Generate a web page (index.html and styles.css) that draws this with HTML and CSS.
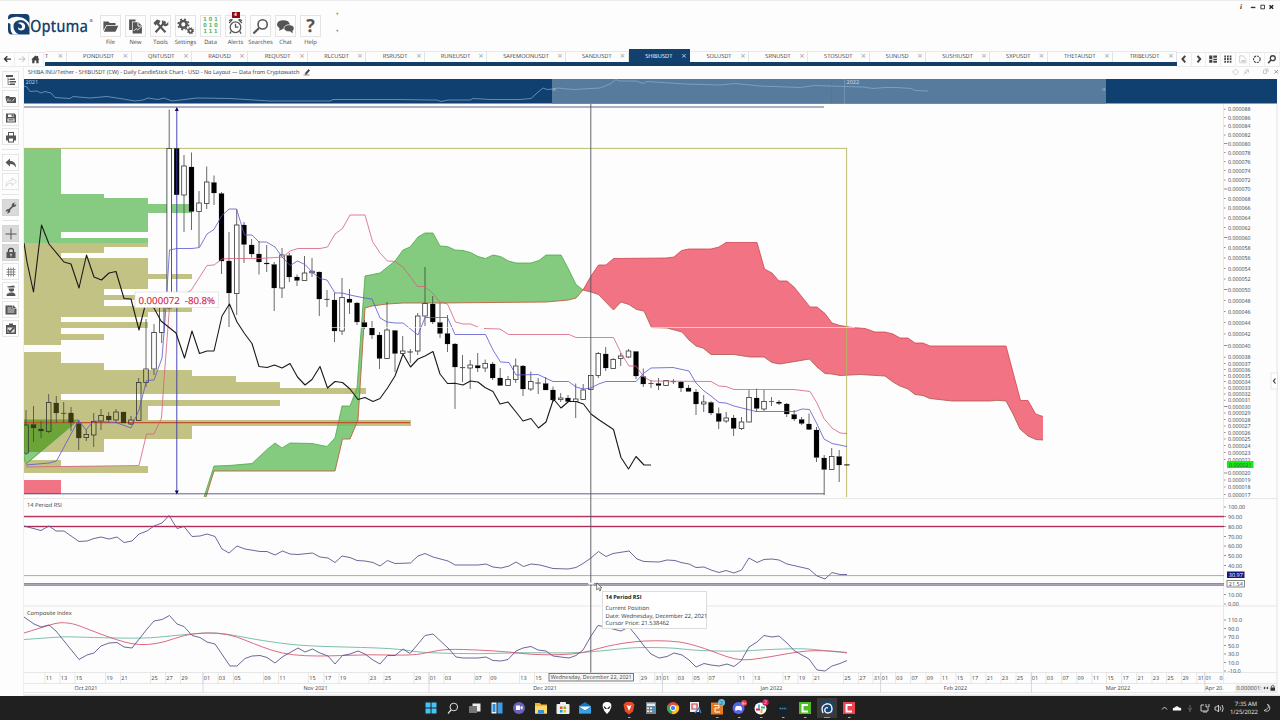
FILE: index.html
```html
<!DOCTYPE html>
<html lang="en">
<head>
<meta charset="utf-8">
<title>Optuma - SHIBUSDT</title>
<link rel="stylesheet" href="styles.css">
</head>
<body>
<svg class="defs" width="0" height="0">
  <symbol id="i-folder" viewBox="0 0 24 24"><path d="M2 5h7l2 2h8v3H6l-4 8z"/><path d="M6.5 11H23l-4 8.500H2.600z"/></symbol>
  <symbol id="i-new" viewBox="0 0 24 24"><path d="M3 2h9v3H7v12H3z"/><path d="M8 6h8l5 5v11H8z"/><path d="M15.500 6v5.500H21M10 18l3-3 2 2 4-4" fill="none" stroke="#fff" stroke-width="1.300"/></symbol>
  <symbol id="i-tools" viewBox="0 0 24 24"><path d="M5 5l14 15M19 5L5 20" fill="none" stroke="#555" stroke-width="3"/><path d="M2 7l5-5 5 2-2 4-3 0-2 3zM16 3l1 4 4 1 2-3v5l-4 2-5-3 0-5z"/></symbol>
  <symbol id="i-gears" viewBox="0 0 24 24"><circle cx="9" cy="9" r="4.700" fill="none" stroke="#555" stroke-width="3.600"/><circle cx="9" cy="9" r="7.500" fill="none" stroke="#555" stroke-width="2" stroke-dasharray="2.900 3"/><circle cx="19" cy="18" r="2.600" fill="none" stroke="#555" stroke-width="2.400"/><circle cx="19" cy="18" r="4.300" fill="none" stroke="#555" stroke-width="1.500" stroke-dasharray="1.700 1.700"/></symbol>
  <symbol id="i-alarm" viewBox="0 0 24 24"><g fill="none" stroke="#555" stroke-width="1.800"><circle cx="12" cy="13" r="7.500"/><path d="M12 8v5h4M3 7l4-4M21 7l-4-4M6 19l-2 3M18 19l2 3M3 4q3-3 5-1M21 4q-3-3-5-1"/></g></symbol>
  <symbol id="i-search" viewBox="0 0 24 24"><circle cx="15" cy="9" r="6.500" fill="none" stroke="#555" stroke-width="2.200"/><path d="M10 14l-8 8" stroke="#555" stroke-width="3"/></symbol>
  <symbol id="i-chat" viewBox="0 0 24 24"><ellipse cx="9" cy="9" rx="9" ry="6"/><path d="M4 12l-1 6 6-3z"/><ellipse cx="17" cy="14.500" rx="7.200" ry="5" stroke="#fff"/><path d="M18 18l4 4v-6z"/></symbol>
  <symbol id="i-tree" viewBox="0 0 24 24"><path d="M2 2h14v4H2zM10 9h10v3H10zM10 14h12v3H10zM10 19h10v3H10z"/><path d="M6 5v16h4M6 11h4M6 16h4" fill="none" stroke="#666" stroke-width="1.500"/></symbol>
  <symbol id="i-open" viewBox="0 0 24 24"><path d="M2 6h6l2 2h10l2 2v10H4L1 10z"/><path d="M6 17V11M10 17v-4M14 17l5-6" stroke="#fff" stroke-width="1.500"/></symbol>
  <symbol id="i-save" viewBox="0 0 24 24"><path fill-rule="evenodd" d="M2 3h17l3 3v15H2zM6 5v5h11V5zM5 13v6h14v-6z"/><path d="M13 5h3v4h-3zM7 14h10v1.500H7zM7 17h10v1H7z"/></symbol>
  <symbol id="i-print" viewBox="0 0 24 24"><path fill-rule="evenodd" d="M6 2h12v7h4v10h-4v4H6v-4H2V9h4zM8 4v5h8V4zM8 15v6h8v-6z"/></symbol>
  <symbol id="i-undo" viewBox="0 0 24 24"><path d="M10 3v5c8 0 12 5 12 13-3-5-6-7-12-7v5L1 11z"/></symbol>
  <symbol id="i-redo" viewBox="0 0 24 24"><path fill="none" stroke="#ccc" stroke-width="1.500" d="M14 4v5C6 9 2 13 2 21c3-5 6-7 12-7v5l9-8z"/></symbol>
  <symbol id="i-wrench" viewBox="0 0 24 24"><path d="M6 18L18 6" stroke="#555" stroke-width="3.500"/><path d="M1 20l2-5 5-1 3 4-3 4-5 1 3-3-1-2zM23 4l-2 5-5 1-3-4 3-4 5-1-3 3 1 2z"/></symbol>
  <symbol id="i-plus" viewBox="0 0 24 24"><path d="M12 1v22M1 12h22" stroke="#555" stroke-width="2"/></symbol>
  <symbol id="i-lock" viewBox="0 0 24 24"><path d="M7 11V7q0-4 5-4t5 4v4" fill="none" stroke="#444" stroke-width="2.600"/><path fill-rule="evenodd" d="M3 10h18v12H3zM12 13a2 2 0 0 0-1 3.500V19h2v-2.500A2 2 0 0 0 12 13z"/></symbol>
  <symbol id="i-hash" viewBox="0 0 24 24"><path d="M7 3v18M12 3v18M17 3v18M3 7h18M3 12h18M3 17h18" stroke="#888" stroke-width="2"/></symbol>
  <symbol id="i-head" viewBox="0 0 24 24"><path d="M4 3l14-2 2 4H6zM7 7h11v4q-5 5-10 0zM3 22q0-8 9-7 9-1 9 7z"/><path d="M2 16h8" stroke="#fff"/></symbol>
  <symbol id="i-note" viewBox="0 0 24 24"><path d="M1 3h14v6h8v12H1z"/><path d="M16 2l6 6h-6z"/><path d="M5 8h8M5 12h14M5 16h14" stroke="#fff" stroke-width="1.600"/></symbol>
  <symbol id="i-clip" viewBox="0 0 24 24"><path d="M2 4h20v18H2zM8 1h8v4H8z"/><path d="M5 9h14v10H5z" fill="#ddd"/><path d="M6 14l4 4 8-9" fill="none" stroke="#444" stroke-width="3"/></symbol>
</svg>
<div class="app">
  <header class="header">
    <div class="logo">
      <svg class="logo-mark" viewBox="0 0 22 22"><path fill="#14406f" d="M4 0h14q3.500 0 3.500 4v16.500H4Q0 20.500 0 16V4q0-4 4-4z"/><path fill="#fdfdfd" d="M0 5.500q5-3.500 11-2.500 8 1 10.500 7.500v4Q19 6.500 13 6 5.500 6 5.500 12.500q0 4 3.500 7l2.500 1H5Q2 17 2.500 12 3 9 0 9z"/><path fill="#fdfdfd" d="M9.500 9q5.500-2 7.500 2 1 5-4 5.500-3.500-.5-3-3.500 1 2 3 1.500 2-1 .5-3.500-1.500-1.500-4-2z"/></svg>
      <svg class="logo-word" viewBox="0 0 66 26"><text x="0" y="17.600" textLength="58" lengthAdjust="spacingAndGlyphs">Optuma</text><text class="reg" x="59.500" y="8">®</text></svg>
    </div>
    <nav class="tools" id="tools"></nav>
    <div class="spots"><i>+</i><i>+</i></div>
    <div class="window-controls"><em>i</em><svg viewBox="0 0 34 10"><path d="M2 5.500h5" stroke="#333" stroke-width="1.500"/><path d="M13 3h4v4h-4z" fill="none" stroke="#333"/><path d="M22.500 3l4 4M26.500 3l-4 4" stroke="#222" stroke-width="1.500"/></svg></div>
  </header>

  <div class="tabbar">
    <div class="nav-buttons">
      <svg viewBox="0 0 15 15"><path d="M4.500 6.500h7.500M8 3.500l-3 3 3 3" fill="none" stroke="#333" stroke-width="1.500"/></svg>
      <svg viewBox="0 0 15 15"><path d="M4 6.500h7M8 3.500l3 3-3 3" fill="none" stroke="#ccc" stroke-width="1.200"/></svg>
      <svg viewBox="0 0 15 15"><path d="M2.500 7L7 2.500l1.500 1.300V3H10v2.200L11.500 7h-1v4H8V8H6v3H3.500V7z" fill="#444"/></svg>
    </div>
    <div class="tabs" id="tabs"></div>
    <div class="nav-buttons">
      <svg viewBox="0 0 15 15"><path d="M9 3L6 6.500 9 10" fill="none" stroke="#444" stroke-width="2.200"/></svg>
      <svg viewBox="0 0 15 15"><path d="M6 3l3 3.500L6 10" fill="none" stroke="#444" stroke-width="2.200"/></svg>
      <svg viewBox="0 0 15 15"><path d="M3.500 2.500h3.500v4H3.500zM3.500 7.200h3.500v3.300H3.500zM8 2.500h4v2.500H8zM8 6h4v1.500H8zM8 8.300h4v2.200H8z" fill="#444"/></svg>
      <svg viewBox="0 0 15 15"><path d="M4.500 2.500v8.500M7.500 2.500v8.500M10.500 2.500v8.500" stroke="#444" stroke-width="1.800" stroke-dasharray="2.200 .7"/></svg>
      <svg viewBox="0 0 15 15"><path d="M4 3h4l3 4v3.500H4z" fill="none" stroke="#ccc"/><path d="M6 7.500h4v2H6z" fill="#ccc"/></svg>
      <svg viewBox="0 0 15 15"><circle cx="7.500" cy="6.700" r="3.600" fill="none" stroke="#444" stroke-width="1.200" stroke-dasharray="2.300 1"/></svg>
      <svg viewBox="0 0 15 15"><circle cx="8.500" cy="5.500" r="2.700" fill="none" stroke="#444" stroke-width="1.500"/><path d="M6.500 7.500l-3 3.500" stroke="#444" stroke-width="1.800"/></svg>
    </div>
  </div>

  <div class="workspace">
    <aside class="rail" id="rail"></aside>
    <main class="panel">
      <div class="panel-title">
        <svg class="title-text" viewBox="0 0 290 11"><text x="4" y="7.100" textLength="271.500" lengthAdjust="spacingAndGlyphs">SHIBA INU/Tether - SHIBUSDT (CW) - Daily CandleStick Chart - USD - No Layout — Data from Cryptowatch</text><path d="M281 6.500l3.500-4 1.200 1-3.500 4zM279.500 8h6" fill="#444" stroke="#444" stroke-width=".6"/></svg>
        <svg class="title-icons" viewBox="0 0 52 11"><g fill="none" stroke="#bbb" stroke-width=".8"><path d="M7.500 2l3 3-3 3-3-3zM15.500 7.500l4.500-4M16 4.500l3 2M17.500 3h3v2.500M35.500 3h3v3.500h-3zM37 2h3v3"/></g><path d="M46.500 3l3.500 3.500M50 3l-3.500 3.500" stroke="#999" stroke-width="1"/></svg>
      </div>
      <svg class="overview" viewBox="24 79 1253 25">
        <rect x="24" y="79" width="1253" height="24.500" fill="#0f4070"/>
        <rect x="552" y="79" width="554" height="24.500" fill="#577b9d"/>
        <path d="M844.500 79v25" stroke="#8fa9c2" stroke-width=".5"/>
        <path d="M831.500 79v25" stroke="#4b7094" stroke-width=".4"/>
        <polyline id="overviewLine" fill="none" stroke="#86add4" stroke-width=".7"/>
        <text x="25.500" y="84">2021</text><text x="846.500" y="84">2022</text>
        <path d="M553.500 88v3M555 88v3M1103 88v3M1104.500 88v3" stroke="#9db5cb" stroke-width=".7"/>
      </svg>
      <div class="chart-wrap">
        <svg class="chart" id="chart" viewBox="24 104 1256 592"></svg>
        <div class="tooltip"><b>14 Period RSI</b><span>Current Position</span><span>Date: Wednesday, December 22, 2021</span><span>Cursor Price: 21.538462</span></div>
        <svg class="cursor" viewBox="0 0 8 11"><path d="M.8.800v8l2-1.800 1.500 3 1.300-.7L4.200 6.500h2.600z" fill="#fff" stroke="#333" stroke-width=".7"/></svg>
      </div>
    </main>
  </div>

  <footer class="taskbar">
    <div class="apps" id="apps"></div>
    <div class="tray">
      <svg viewBox="0 0 68 14"><g fill="none" stroke="#ddd" stroke-width=".9"><path d="M2 8.500L4.500 6 7 8.500"/><path d="M44 4h-3v6h7V7M46 3v3h3V3M43 11h4"/><path d="M55 6h1.500L58.500 4v7l-2-2H55zM60 5.500q1.500 2 0 4M62 4q2.500 3.500 0 7"/></g><path d="M13 9.500q-1-3 2-3 1.500-2.500 4 0 3 0 2 3z" fill="#fff"/><path d="M30 4v4M28 7q2 4 4 0M30 9v2" fill="none" stroke="#666" stroke-width="1"/></svg>
      <div class="clock"><span>7:35 AM</span><span>1/25/2022</span></div>
      <svg class="moon" viewBox="0 0 10 12"><path d="M5.500 2q3 4-3.500 6.500 4.500 2 5.800-1.500Q8.500 4 5.500 2z" fill="none" stroke="#ddd" stroke-width=".8"/></svg>
    </div>
  </footer>
</div>
<script src="script.js"></script>
</body>
</html>
```

FILE: styles.css
```css
* { box-sizing: border-box; }
body { margin: 0; background: #fdfdfd; font-family: "Open Sans", "Noto Sans", sans-serif; color: #444; text-rendering: geometricPrecision; }
svg { display: block; flex: none; }
.defs { position: absolute; }
.app { width: 1280px; height: 720px; display: flex; flex-direction: column; overflow: hidden; background: #fdfdfd; border-top: 1px solid #ececec; }

.header { height: 48px; display: flex; flex: none; }
.logo { width: 98px; padding: 13px 0 0 8px; display: flex; }
.logo-mark { width: 22px; height: 22px; }
.logo-word { width: 66px; height: 26px; }
.logo-word text { font-size: 17px; fill: #17436f; font-weight: 600; }
.logo-word .reg { font-size: 4px; }
.tools { display: flex; padding-top: 14px; }
.tool { width: 25px; height: 31px; display: flex; flex-direction: column; align-items: center; position: relative; }
.tool-box { width: 21px; height: 22px; border: 1px solid #e4e4e4; display: flex; align-items: center; justify-content: center; }
.tool-box svg { width: 17px; height: 17px; fill: #555; }
.tool-label { font-size: 5.800px; line-height: 8px; margin-top: .5px; color: #444; }
.bits { font: bold 6px/6px "Liberation Sans", sans-serif; letter-spacing: 2.200px; color: #3fae57; padding-left: 2px; text-align: center; }
.help { font: bold 18px/20px "Open Sans", sans-serif; color: #555; }
.badge { position: absolute; top: -3px; left: 8.500px; width: 8px; height: 6px; background: #8e0a1c; color: #fff; font-size: 5px; line-height: 6px; text-align: center; font-weight: bold; }
.spots { display: flex; flex-direction: column; gap: 9px; padding: 9px 0 0 12.500px; }
.spots i { font-style: normal; font-size: 6px; line-height: 8px; color: #333; }
.window-controls { margin-left: auto; display: flex; height: 10px; margin-top: 1px; }
.window-controls em { font: italic bold 7px/11px "Liberation Serif", serif; color: #222; width: 9px; }
.window-controls svg { width: 31px; height: 10px; }

.tabbar { height: 18px; flex: none; display: flex; align-items: flex-end; }
.nav-buttons { display: flex; height: 15px; border-top: 1px solid #e8e8e8; border-bottom: 1px solid #eaeaea; }
.nav-buttons svg { width: 14.700px; height: 14px; border-right: 1px solid #eee; }
.nav-buttons:first-child { width: 45px; }
.tabs { width: 1132px; height: 18px; flex: none; display: flex; align-items: flex-end; border-bottom: 4px solid #123f69; padding-bottom: 0; margin-bottom: 1px; overflow: hidden; }
.tab { height: 11px; flex: none; display: flex; align-items: flex-start; border-top: 1px solid #e8e8e8; border-right: 1px solid #e3e3e3; font-size: 5.700px; line-height: 8px; padding-left: 8px; color: #3c3c3c; }
.tab span { flex: 1; text-align: center; white-space: nowrap; }
.tab i { width: 8px; font: 7px/8px "DejaVu Sans", sans-serif; color: #999; }
.tab.first { padding-left: 0; }
.tab.first span { text-align: left; }
.tab.active { height: 13px; padding-top: 2px; background: #124170; border-color: #124170; color: #fff; }
.tab.active i { color: #c7d3df; }

.workspace { display: flex; height: 629px; flex: none; }
.rail { width: 24px; flex: none; border-right: 1px solid #eee; display: flex; flex-direction: column; padding: 4px 0 0 2px; gap: 2px; }
.rail-button { width: 17px; height: 17px; border: 1px solid #e6e6e6; flex: none; display: flex; align-items: center; justify-content: center; }
.rail-button svg { width: 12px; height: 12px; fill: #555; }
.rail-button.on { background: #dadada; border-color: #d4d4d4; }
.rail-rule { height: 3px; width: 17px; border-top: 1px solid #e4e4e4; margin: 2px 0 0; }
.panel { width: 1256px; }
.panel-title { height: 12px; display: flex; justify-content: space-between; }
.title-text { width: 290px; height: 11px; }
.title-text text { font-size: 5.700px; fill: #333; }
.title-icons { width: 52px; height: 11px; }
.overview { width: 1253px; height: 25px; }
.overview text { font-size: 5.500px; fill: #cfdbe8; }
.chart-wrap { position: relative; }
.chart { width: 1256px; height: 592px; }
.chart text { font-size: 5.500px; fill: #444; }
.chart .mid { text-anchor: middle; }
.chart .panel-name { font-size: 5.700px; fill: #333; }
.chart .measure { font-size: 9.500px; fill: #d2203c; stroke: #d2203c; stroke-width: .15; }
.chart .inverse { fill: #fff; }
.tooltip { position: absolute; left: 578px; top: 487px; width: 105px; height: 38px; background: #fff; border: 1px solid #ddd; padding: 1.500px 2.500px; display: flex; flex-direction: column; font-size: 5.750px; line-height: 7.600px; color: #333; white-space: nowrap; }
.tooltip b { margin-bottom: 4px; font-size: 5.600px; color: #222; }
.cursor { position: absolute; left: 572px; top: 478px; width: 7px; height: 10px; }

.taskbar { height: 24px; flex: none; background: #202020; display: flex; justify-content: space-between; align-items: center; }
.apps { display: flex; padding-left: 420px; }
.apps svg { width: 22.030px; height: 22px; }
.apps text { text-anchor: middle; }
.tray { display: flex; align-items: center; padding-right: 8px; gap: 2px; }
.tray > svg { width: 68px; height: 14px; }
.clock { display: flex; flex-direction: column; text-align: right; color: #eee; font-size: 5.900px; line-height: 8px; width: 27px; }
.tray .moon { width: 10px; height: 12px; margin-left: 3px; }
```

FILE: script.js
```js
const byId = id => document.getElementById(id);

// Main toolbar
byId('tools').innerHTML = [
  ['File', 'folder'], ['New', 'new'], ['Tools', 'tools'], ['Settings', 'gears'], ['Data', ''],
  ['Alerts', 'alarm'], ['Searches', 'search'], ['Chat', 'chat'], ['Help', '']
].map(([label, icon]) => {
  const art = icon ? `<svg><use href="#i-${icon}"/></svg>`
    : label === 'Data' ? '<div class="bits">101<br>010<br>111</div>' : '<div class="help">?</div>';
  return `<div class="tool"><div class="tool-box">${art}</div><div class="tool-label">${label}</div>${label === 'Alerts' ? '<div class="badge">4</div>' : ''}</div>`;
}).join('');

// Symbol tabs: name and width
byId('tabs').innerHTML = [
  ['T', 21.5, 'first'], ['PONDUSDT', 65], ['QNTUSDT', 60.5], ['RADUSD', 56], ['REQUSDT', 60], ['RLCUSDT', 58],
  ['RSRUSDT', 59], ['RUNEUSDT', 62], ['SAFEMOONUSDT', 79], ['SANDUSDT', 62.5], ['SHIBUSDT', 61.5, 'active'],
  ['SOLUSDT', 59], ['SRNUSDT', 59], ['STOSUSDT', 61.5], ['SUNUSD', 56.5], ['SUSHIUSDT', 64],
  ['SXPUSDT', 57.5], ['THETAUSDT', 65.5], ['TRIBEUSDT', 64]
].map(([n, w, c = '']) => `<div class="tab ${c}" style="width:${w}px"><span>${n}</span><i>×</i></div>`).join('');

// Left rail
byId('rail').innerHTML = ['tree', 'open', 'save', 'print', '-', 'undo', 'redo', '-', 'wrench*', '-', 'plus*', 'lock*', 'hash', 'head', 'note', 'clip']
  .map(n => n === '-' ? '<div class="rail-rule"></div>'
    : `<div class="rail-button${n.endsWith('*') ? ' on' : ''}"><svg><use href="#i-${n.replace('*', '')}"/></svg></div>`).join('');

byId('overviewLine').setAttribute('points', '24,86 27,87 30,91.5 37,91 41,93 45,91.5 51,93 55,97.5 70,98.5 73,96.5 90,98 107,96.5 120,98.5 135,101 143,100 148,98 158,99.5 164,98 172,101 197,98 230,98.5 270,101 330,101 333,99.5 400,99.5 430,100 437,100 441,101.5 448,100 470,100 473,98.5 490,99.5 520,99.5 531,98.5 537,93 543,88 547,89.5 553,89 558,88 573,89.5 600,88 610,84 616,79.5 619,81 636,81 643,83.5 647,81.5 685,84 720,85 735,83.5 760,86 800,87.5 815,85.5 845,86.5 863,87 873,88.5 885,87.5 897,87.5 911,88.5 915,90.5 928,91');

let out = '';
const add = s => { out += s; };
const line = (x1, y1, x2, y2, c, w = 1) => add(`<path d="M${x1} ${y1}L${x2} ${y2}" stroke="${c}" stroke-width="${w}"/>`);
const poly = (pts, c, w = 1) => add(`<polyline points="${pts}" fill="none" stroke="${c}" stroke-width="${w}" stroke-linejoin="round"/>`);
const rect = (x, y, w, h, f, s = 'none') => add(`<rect x="${x}" y="${y}" width="${w}" height="${h}" fill="${f}" stroke="${s}" stroke-width=".7"/>`);
const text = (x, y, t, cls = '', extra = '') => add(`<text x="${x}" y="${y}" class="${cls}" ${extra}>${t}</text>`);
// Smooth curve through points using midpoint quadratics
const smooth = (pts, c) => {
  const p = pts.split(' ').map(s => s.split(',').map(Number));
  let d = `M${p[0]}`;
  for (let i = 1; i < p.length - 1; i++) d += `Q${p[i]} ${(p[i][0] + p[i + 1][0]) / 2},${(p[i][1] + p[i + 1][1]) / 2}`;
  add(`<path d="${d}L${p[p.length - 1]}" fill="none" stroke="${c}" stroke-width=".9"/>`);
};

// Volume profile: top, bottom, right edge
const G = '#87cb83', O = '#c2c284';
[[148, 194, 61, G], [194, 198, 104, G], [198, 232, 148, G], [204, 213, 192, G], [232, 237.5, 61, G], [237.5, 243, 148, G],
 [243, 247, 148, O], [247, 253, 104, O], [253, 258, 61, O], [258, 273.5, 148, O], [273.5, 279, 192, O], [279, 289, 148, O],
 [289, 295, 104, O], [295, 300, 148, O], [300, 306, 104, O], [306, 311.5, 192, O], [311.5, 316.5, 148, O], [316.5, 322, 61, O],
 [322, 328, 148, O], [328, 333.7, 61, O], [333.7, 340, 104, O], [340, 345, 61, O], [351.7, 363, 61, O], [363, 369.5, 104, O],
 [369.5, 375.5, 192, O], [375.5, 381.7, 235.7, O], [381.7, 388, 279.5, O], [388, 394, 366.3, O], [394, 400, 61, O],
 [400, 406, 279.5, O], [406, 419.5, 148, O], [419.5, 426, 410.7, O], [426, 439, 192, O], [439, 452, 104, O],
 [460, 466, 61, O], [466, 472.7, 148, O], [480, 493.7, 61, '#f17485']
].forEach(([a, b, r, c]) => add(`<rect x="24" y="${a}" width="${r - 24}" height="${b - a}" fill="${c}" shape-rendering="crispEdges"/>`));

// Ichimoku clouds
add('<polygon points="24,419.5 79,419.5 72,425 26,464 24,460" fill="#4f9a1e" opacity=".75"/><polygon points="24,452 39,452 26,464" fill="#87cb83"/>');
line(26, 464, 75, 423, '#3f9a3f', .8);
const gTop = '204,497 214,466 229,465.5 252,463.5 259,457 267,449.5 275,443 282,448 290,443 312,443.5 327,446.5 335,438 342,406 350,406 357,388 365,276 380,273 387.5,267 395,261 403,250 410,247 418,237 425,233 433,233 440,246 447.5,246.5 455,250 463,250.5 470.5,252.5 478,256.5 485.5,258.5 493,255 500.5,256.5 508.5,261 516,263 531,263 539,260.5 546,255 561,255 568.5,269 576,284.5 583,290';
const gBot = '583,290 576,298 568.5,300 546,302 440,303 403,303 387,304 372,306 365,308 358,420 350,439 342.5,439 335,471 214,471 206,497';
const rTop = '583,290 591,276 598.5,265 606,265 613.5,258.5 666,258 674,257 681.5,250.5 689,249 711,249 719,247 726,242.5 757,242.5 764.5,269 772,273 779,281 787,281 794,287 802,297 810,307 817,307 825,313.5 832,323 840,325.5 852,327.5 865,328.5 875,332 885,332 893,334 900,338 908,338 915,343 923,343 930,346 1006,346 1020.5,400.5 1028,400.5 1035.7,414 1043,416.5';
const rBot = '583,290 591,292 598.5,294.5 613.5,310 621,302 629,304.5 636.5,309.5 644,311 651.5,327.5 667,328 682,332 689,340 696,346 703,348 711,354.5 734,354.5 750,357 764,357 772,362.5 779.5,364 795,361.5 809.5,359 817,367 825,373.5 832,374 840,375.5 860,374.5 885,376 893,382 900,386 908,389 915,394.5 923,395.5 930,398.5 952,401 990,401 997,400.3 1006,401 1013,414 1020,429 1028,436 1036,439.5 1043,440';
add(`<polygon points="${gTop} ${gBot}" fill="#6cc067" opacity=".84"/>`);
add(`<polygon points="${rTop} ${rBot.split(' ').reverse().join(' ')}" fill="#f17384"/>`);
poly(gTop, '#4aa84a', .8); poly(gBot, '#c0603f', .9); poly(rTop, '#d0454f', .8); poly(rBot, '#a8584a', .8);
line(24, 422.6, 410, 422.6, '#c4502f', 1.1);

// Frame and measure lines
line(24, 148.4, 847, 148.4, '#b5b562', .9); line(846.6, 148, 846.6, 497, '#b5b562', .9);
line(24, 107, 824, 107, '#3c3970', .8); line(24, 493.8, 824, 493.8, '#3c3970', .8);

// Candles: centre x, high, low, body top, body bottom, filled
const C = [[26,410,455,425,453,0],[33.5,406,442,424.5,428,1],[41,421,438,429,431,1],[48.7,394,433,402.5,431.5,0],[56.3,396,423,403,413,1],[63.7,402,423,413,413.6,1],[71,407,431,413,422.5,1],[78.7,420,450,423.5,438,1],[86.3,430,441,434.5,437.5,0],[93.7,413,447,421.5,435,0],[101,409,430,415.5,421,0],[108.7,412,422,416,420,1],[116,409,423,412,420,0],[123.5,412,423,412,423,1],[131,416,425,420,424,0],[138.7,378,421,382.5,420.5,0],[146,319,387,369,382.5,0],[154,324,375,332.5,369,0],[161.7,305,343,305,332.5,0],[169.2,109.5,310,148.4,308,0],[176.6,148,195,148.4,194.8,1],[184,155,232,166,195,0],[191.5,152.5,230,167,211.5,1],[199,191,247,203,211.5,0],[206.7,166.5,209,182,203.5,0],[214,175.5,205,182.5,193,1],[221.5,192,274,193.5,261,1],[229,232,327,261,293,1],[236.7,209,315,225,293.5,0],[244,222,263,225,244.5,1],[251.6,239,257.5,245,254,1],[259,241,274.5,254,262,1],[266.7,245,272,263,264,1],[274.2,262,311,264.5,288,1],[282,248,298,255,288,0],[289.3,253,282,255.5,277,1],[297,274.5,286,277,280.5,1],[304.5,256,281,273,280.5,0],[312,258,277,271.2,272.8,0],[319.3,271.5,316,272,299,1],[327,290,307,299,299.6,1],[334.5,293,342,300,331,1],[342,278,335,297.5,331,0],[349.5,289,314,299,302.5,1],[357,302,325,303,322,1],[364.5,320,329,322.5,327,1],[372,321,339,328,335,1],[379.5,332,369,335,358.5,1],[387,302,359,330,358.5,0],[395,330,372,330.5,353.5,1],[402.7,336,354,351,353.5,0],[410.3,349,363,351.7,352.3,1],[417.7,313,355,316,351,0],[425,267,326,303.5,316,0],[432.7,296,324,304,322,1],[440,303,338,322.5,333.5,1],[447.5,315,352,333.5,344,1],[455,343,409,344,367,1],[462.5,355,382,367.5,368,1],[470.2,360,389,365,368,0],[477.7,353,372,365.5,368,1],[485.2,359.5,372,363.5,368,0],[492.6,362,380,364,378,1],[500.2,368,385.5,378,385.5,1],[508,376,386,379.5,385.5,0],[515.7,358.5,383,366,379.5,0],[523,365,396,366,389,1],[530.8,371.5,391,381.5,389,0],[538.2,378,394,382.8,383.3,1],[545.6,377,390,383.5,390,1],[553,386.5,402,390,400,1],[560.7,393,402,398,399.5,0],[568,395,402,398,401.5,1],[575.7,383.5,418,399,401.5,0],[583.2,384,400,390,399.5,0],[590.8,375,390,375.5,389.5,0],[598.3,352,378,353.5,375.5,0],[605.7,347,371,354,368,1],[613.2,358,369,359.5,368.5,0],[620.7,353,366,356,358.5,0],[628.5,349,358,351,357,0],[636,351,379,351.5,376,1],[643.3,368.5,387,376.5,384,1],[651,380,388,383.2,383.8,1],[658.5,378,390,383.5,385.5,1],[666,380,386,380.5,385.5,0],[673.4,379,384,381.5,382,1],[681,381,392,382,388,1],[688.5,385,391,388,391.5,1],[696,389,415,392,404,1],[703.7,395,412,402,404,0],[711,401,415,402.5,413,1],[718.7,407.5,429,413.5,421.5,1],[726.2,412,423,418,421,0],[733.6,415,436,418,428.5,1],[741.5,417,430,422,428.5,0],[749,390,422,397.5,422,0],[756.6,388.5,412,398,408.5,1],[764,390,411,401.5,409,0],[771.5,397,406,401.2,401.7,1],[779,400,405,402,403.5,1],[786.7,403,417,404,414,1],[794.2,410,421,414.5,419,1],[801.6,417,425,419.5,423.5,1],[809,413.5,430,424,429.5,1],[816.5,427,462,430,457.5,1],[824.2,455,495,458,469.5,1],[831.7,448,469,456.5,469.5,0],[839.2,450,482,456.5,465,1],[847,464.6,465.2,464.5,465.3,1]];
C.forEach(([x, h, l, t, b, f]) => {
  const ink = x < 135 ? '#3a3a10' : '#000';
  if (h < t) line(x, h, x, t, '#444', .8);
  if (l > b) line(x, b, x, l, '#444', .8);
  add(`<rect x="${x - (f ? 2.5 : 2.3)}" y="${t}" width="${f ? 5 : 4.6}" height="${Math.max(b - t, .5)}" fill="${f ? ink : (x < 165 ? 'none' : '#fff')}" stroke="#333" stroke-width="${f ? .2 : .8}"/>`);
});

line(176.8, 108, 176.8, 493, '#3a35a8', .9);
add('<path d="M174.8 111l2-4 2 4zM174.800 490.500l2 4 2-4z" fill="#110a60"/>');

// Conversion, base and lagging lines
poly('26,467 139,465.5 146.5,434 154,434 161.5,418 164,380 167,340 170,300 191,290.5 207,265.5 214,265 222,259 229,258.5 259,258.5 275,257.5 283,257 290,251 298,248.5 320,248.5 327.5,247 335,234 342.5,228.5 350,215 365,215 372.5,241.5 380,253 387.5,261 395,261.5 403,267 417.5,286.5 425,286.5 432.5,293 440,302 447.5,304 455.5,322 463,324 470.5,324 478,327', '#d5607c', .8);
poly('484,328.5 500,329 508.5,334.5 569,334.5 576,337.5 613.5,337.5 621,353 629,366 636,366 644,377 651,381 711,381.5 719,386 726,386.5 734,389.5 794,389.5 810,391.5 817,403 824,418.5 832,428 840,433 847,433.5', '#d5607c', .8);
poly('26,465 49,463 56.5,461 78.5,420 86,430 93.5,421 116,422.5 131,428 139,410 146.5,380.5 154,380 162,358 165,320 167,290 169.5,250 177,248.5 192,248.5 199.5,247.5 207,234 214,229.5 221.500,216 229,209 236.5,209 244.5,235 252,235 259,242 266.5,242 275,247 283,258 290,265.5 297.5,261 305,264.5 312,272 320,278.5 327,280 335,293 342,293 350,295 357,296.5 365,298 372,299 380,318 387,322 395,323 403,323 410.5,329 418,335 425,317.5 447.5,317.5 455,334.5 485.5,334.5 493,350 500.5,362 509,362.5 516,375 538,374.5 553,381.5 568.5,381.5 576,387 583.5,389 591,388 598.5,384 606,381.5 636,381.5 644,373 651,368 673,367.5 689,371 696,383 704,391 711,396 719,402.5 726,403 734,406 756,411.5 795,411.5 802,409 809.5,409.5 817,424 824,439 832,443.5 847,446.5', '#5856d0', .8);
poly('24,243 27,262 33.5,292 41.5,225 49,244 64,262 71,264 79,288 86.5,255 94,277 101.5,280 109,273 116,271.5 124,298.5 131,299 139,330 146,302 154,308 161,321 176,333 184.5,358 192,331 199.5,353.5 207,351 214,351 222,316 229.5,304 237,322 244.5,333.5 252,343.5 259,366.5 267,367.5 274.5,365 282,368 290,363.5 297.5,377 305,385 312,379.5 320,366.5 327.5,388 335,381.5 342.5,382.5 350,389 358,399.5 365,397.5 373,401.5 380,398.5 387.5,388 395,376 403,354 410.5,367 418,359 425,356 433,351.5 440,374 447.5,383.5 455,383.3 463,385 470.5,381 478,382 485,387.5 493,391.5 500,404 508,402 516,412 523,421 531,418.5 538.5,428 546,422 553.5,399 561,408 568.5,401.5 576,401.5 583.5,404 591,414 598.5,419.5 606,424.5 613.5,429.5 621,457.5 628.5,469 636,456.5 644,465 651,465', '#1a1a1a', 1.1);
line(330, 327.5, 855, 327.5, 'rgba(255,255,255,.75)', .8);

rect(135, 292, 83.5, 15.5, '#fff', '#ddd');
text(138.5, 303.5, '0.000072&nbsp; -80.8%', 'measure', 'textLength="76.500" lengthAdjust="spacingAndGlyphs" xml:space="preserve"');

// Pane separators
[498.5, 606, 672.5, 683.5, 692.5].forEach(y => line(24, y, 1277, y, '#dcdcdc', .7));
line(1223.5, 104, 1223.5, 683, '#e2e2e2', .8); line(1277, 104, 1277, 693, '#ddd', .8);
add('<rect x="24" y="694.500" width="1256" height="1.500" fill="#e4e4e4"/>');

// RSI pane
[516.6, 526.5].forEach(y => { line(24, y, 1224, y, '#ecaac0', 2); line(24, y, 1224, y, '#b02a55', 1); });
line(24, 575.6, 1224, 575.6, '#7dbb74', .9);
line(24, 584.5, 1224, 584.5, '#aaa5b5', 2.8); line(24, 583.5, 1224, 583.5, '#77738f', .5); line(24, 585.5, 1224, 585.5, '#8a86a0', .4);
poly('24,526 41,530.5 49,526 56,531 64,531 79,541.5 87,541 94,538.5 101,537 109,539 117,537 124,542.5 132,541 139,534 147,531 154,526 162,523 169,515.5 177,528.5 184,526.5 192,536.5 200,536 207,534 215,536.5 222,549 229,553 237,546 245,549 260,551.5 267,551.5 275,555 282.5,551 290,554 298,554.5 312.5,553 320,557 328,558 335,562.5 342,556 350,557.5 357,560.5 365,561 373,562.5 380,566 387.5,560.5 395,563.5 410.5,563 418,556 425,553.5 433,557 448,561 455,565 478,565 486,564 493,567 501,568 509,566 516,562 523.5,566.5 531,564 540,565 553,568.5 568,569 576,567.5 583,563.5 591,558 598.5,551.5 606,556.5 613,553.5 629,551 637,559 644,561.5 659,562 667,560 675,560.5 681,562.5 689,564 696,567.5 704,567 711,570 719,572.5 726,570.5 734,573 741.5,570 749,558 757,562.5 764,559.5 772,559 779,560 787,564 809,569 817,576 825,579 832,572.5 840,574.5 847,574.5', '#5c578f', .9);
text(27, 506.6, '14 Period RSI', 'panel-name');

// Composite index pane
smooth('24,639.5 45,638 65,636.5 90,637.5 145,638.5 170,636 207,632.5 225,633.5 250,638.5 275,642.5 305,646 365,647.5 390,648.5 405,650 418,652 435,653 480,654 520,652.5 560,653 583,652.5 600,651 620,649 635,647.5 655,647.5 675,648 695,650.5 740,651.5 765,649.5 800,648.5 815,649.5 847,653', '#6fb8a4');
smooth('24,633 40,628 56,623 64,622.5 75,624 95,632 117,640 132,644 147,645 165,642 184,635 205,632.5 228,634 245,640 262,647 282,653.5 305,656 330,656 370,654.5 413,655.5 430,652 447,649 480,650 510,652 530,654.5 560,655 583,653 600,648 615,644.5 635,641.5 655,640.5 680,641.5 697,646 712,651 727,657 742,660.5 760,658.5 780,655 800,651.5 815,650.5 832,651 847,652.5', '#d85a70');
poly('24,617 34,624 41,627 49,625 56,631 79,659.5 87,655 94,653 101,646 109,643 117,642.5 124,647 132,648 140,638 147,629 154,621 162,619.5 169.5,615.5 177,624 184,626.5 192,635.5 200,637.5 207,642 215,644 230,666 237,666 245,658.5 252,656 260,655.5 267,657.5 275,663 283,656.5 298,648 305,652 312.5,649 320,653 328,656 335,664 342.5,655.5 350,654 358,651 365,654 373,660 380,664 387.5,655.5 395,655.5 403,649 410,653.5 418,644 425,635.5 433,634 448,648 456,657 463,658 478,658 486,657 493,660.5 501,661 508,659.5 516,651 523,648 531,646.5 538,650 546,651 553,656 561,657 569,658 576,655.5 583,650 591,636 598,625.5 606,627 613,629 621,631 629,627 636.5,636 644,646 651,654 659,658 667,656.5 674,653 682,655 689,660 696,667 704,663.5 711,665 719,666 727,664 734,666.5 741,661 749,647 757,642 764,635.5 772,637 779,636 787,643 794,650.5 809,659 817,670 825,671 832,666 840,663.5 847,660.5', '#5c578f', .9);
text(27, 615.2, 'Composite Index', 'panel-name');

// Price scale
const prices = { 88: 109.3, 86: 117.5, 84: 126, 82: 135, 80: 143.5, 78: 152.5, 76: 161.5, 74: 170.5, 72: 180, 70: 189, 68: 198.5, 66: 208, 64: 218, 62: 227.5, 60: 237.5, 58: 247.5, 56: 258, 54: 268.5, 52: 279, 50: 289.5, 48: 300.5, 46: 311.5, 44: 322.5, 42: 334, 40: 345.5, 38: 357.3, 37: 363.5, 36: 369.5, 35: 375.5, 34: 381.5, 33: 388, 32: 394, 31: 400.3, 30: 406.5, 29: 413, 28: 419.5, 27: 426, 26: 432.5, 25: 439, 24: 445.5, 23: 452.5, 22: 459.5, 20: 473, 19: 480, 18: 487, 17: 494.5 };
const fit = 'textLength="22.500" lengthAdjust="spacingAndGlyphs"';
for (const p in prices) {
  line(1224, prices[p], p % 10 ? 1225.5 : 1227.5, prices[p], '#666', .7);
  text(1228, prices[p] + 2, '0.0000' + p, '', fit);
}
rect(1227, 461, 26.5, 7, '#12ef12');
text(1229, 466.5, '0.000021', '', fit);
[['100.00', 507], ['90.00', 516.5], ['80.00', 526.5], ['70.00', 536.5], ['60.00', 546], ['50.00', 555.5], ['40.00', 565.5], ['10.00', 594.5], ['0.00', 604],
 ['110.0', 620], ['90.0', 628.5], ['70.0', 637], ['50.0', 645.5], ['30.0', 654], ['10.0', 662.5], ['-10.0', 671]].forEach(([t, y]) => {
  line(1224, y, 1226, y, '#666', .7); text(1228, y + 2, t);
});
rect(1227, 571.5, 17.5, 6.5, '#17177c'); text(1235.8, 576.7, '30.97', 'mid inverse');
rect(1227, 580.5, 17.5, 6.5, '#fff', '#555'); text(1235.8, 585.8, '21.54', 'mid');

// Date scale
[[49, 11], [64, 13], [79, 15], [109.5, 19], [124.5, 21], [154.5, 25], [169.5, 27], [184.5, 29],
 [207, 1], [222, 3], [237.5, 5], [267.5, 9], [282.5, 11], [312.5, 15], [328, 17], [343, 19], [373, 23], [388, 25], [418, 29],
 [433, 1], [448, 3], [478.5, 7], [493.5, 9], [523.5, 13], [538.5, 15], [644, 29], [658.7, 31],
 [666, 1], [681, 3], [696.7, 5], [711.7, 7], [742, 11], [757, 13], [787, 17], [802, 19], [817, 21], [847.5, 25], [862.5, 27], [877, 31],
 [885, 1], [899.5, 3], [914.6, 7], [930, 9], [945, 11], [960, 15], [975, 17], [990, 21], [1005, 23], [1020, 25],
 [1035, 1], [1050, 3], [1065.6, 7], [1080.7, 9], [1096, 11], [1110.6, 15], [1125.6, 17], [1140.7, 21], [1156, 23], [1170.5, 25], [1185.6, 29], [1200.8, 31],
 [1208.3, 1]
].forEach(([x, d]) => {
  line(x - 4, 672.5, x - 4, 683.5, '#ddd', .7);
  text(x, 680, String(d).padStart(2, '0'), 'mid');
});
text(1219.5, 680, '0');
[203, 429, 662.5, 880.5, 1031.5, 1205].forEach(x => line(x, 672.5, x, 692.5, '#ccc', .7));
[[86, 'Oct 2021'], [315.5, 'Nov 2021'], [545, 'Dec 2021'], [771.5, 'Jan 2022'], [955.5, 'Feb 2022'], [1118, 'Mar 2022'], [1214.5, 'Apr 20.']].forEach(([x, t]) => text(x, 689.5, t, 'mid'));
rect(1235, 684.5, 41, 7.5, '#eee');
text(1236.5, 690, '0.000001:', '', 'textLength="25" lengthAdjust="spacingAndGlyphs"');
add('<path d="M1263.500 688l1.500-1.500v3zM1268.500 688l-1.500-1.500v3zM1265 687.700h2v.600h-2zM1270.500 687.500h4.500v3.200h-4.500z" fill="#333"/><path d="M1271.500 687.500v-1.500q1.300-1.500 2.500 0v1.500" fill="none" stroke="#333" stroke-width=".7"/>');
rect(1271, 373, 6.5, 16, '#fff', '#ddd');
add('<path d="M1275.500 378.500l-2 2.500 2 2.500" fill="none" stroke="#333" stroke-width="1.200"/>');

// Crosshair
line(590.8, 104, 590.8, 672.5, '#555560', .9);
add('<path d="M588.500 581l5 5M593.500 581l-5 5M588 583.500h6" stroke="#fff" stroke-width=".9"/>');
rect(549, 673.5, 84.5, 7.5, '#f6f6f6', '#444');
text(591.2, 679.3, 'Wednesday, December 22, 2021', 'mid', 'textLength="81" lengthAdjust="spacingAndGlyphs"');
byId('chart').innerHTML = out;

// Taskbar icons on a 22 unit grid
const dot = '<path d="M10 20.500h2.500" stroke="#aaa"/>';
byId('apps').innerHTML = [
  '<path d="M5.500 5.500h5v5h-5zM11.500 5.500h5v5h-5zM5.500 11.500h5v5h-5zM11.500 11.500h5v5h-5z" fill="#45c3f5"/>',
  '<circle cx="11.800" cy="10" r="3.800" fill="none" stroke="#ddd" stroke-width="1"/><path d="M9 13l-3 3.500" stroke="#ddd" stroke-width="1.200"/>',
  '<path d="M8.500 6.500h8v8h-8z" fill="#eee"/><path d="M5 9h8v7H5z" fill="#777"/>',
  '<path d="M5.500 5.500h5v11h-5z" fill="#e8f6ff"/><path d="M11.500 5.500h5v11h-5z" fill="#3f9be8"/><path d="M6.500 7h3v8h-3z" fill="#2b8ddd"/>',
  '<circle cx="11" cy="11" r="6" fill="#6a62b8"/><path d="M8 8.500h4v4.500H8zM12.500 10l2-1.300v4l-2-1.300z" fill="#fff"/>',
  '<path d="M5 6h5l1 1.500h6v9H5z" fill="#f1b62b"/><path d="M5 9h12v7.500H5z" fill="#ffd968"/><path d="M8 13h6v3.500H8z" fill="#3990d9"/>',
  '<path d="M5 7.500h12v9H5zM8.500 7.500v-2h5v2" fill="#eee" stroke="#eee"/><path d="M8 9.500h2.500V12H8z" fill="#f25022"/><path d="M11.500 9.500H14V12h-2.500z" fill="#7fba00"/><path d="M8 13h2.500v2.500H8z" fill="#00a4ef"/><path d="M11.500 13H14v2.500h-2.500z" fill="#ffb900"/>',
  '<path d="M5 9l6-4 6 4v7.500H5z" fill="#1675bd"/><path d="M5 9.500h12l-6 4z" fill="#f2f8ff"/><path d="M5 16.500V10l6 4 6-4v6.500z" fill="#35a3e8"/>',
  '<path d="M11 5q5 0 4.300 5-1 4-4.300 7-3.300-3-4.300-7Q6 5 11 5z" fill="#fff"/><path d="M8 9.500l2.500 2H9zM14 9.500l-2.500 2H13z" fill="#111" stroke="#111" stroke-width=".6"/>',
  '<path d="M8 5h6l2.500 2.500-1.500 7-4 3-4-3-1.500-7z" fill="#e94b26"/><path d="M8.500 8l2.500 6 2.500-6L11 9z" fill="#fff"/>' + dot,
  '<path d="M6 5h10v12H6z" fill="#79848d"/><path d="M7 6.500h8V9H7z" fill="#d9f0ff"/><path d="M7 10.500h2V12H7zM10 10.500h2V12h-2zM7 13.500h2V15H7zM10 13.500h2V15h-2z" fill="#eee"/><path d="M13 10.500h2V15h-2z" fill="#2f9ce8"/>',
  '<circle cx="11" cy="11" r="6" fill="#e74b3b"/><path d="M11 11L5.800 8A6 6 0 0 0 10 17z" fill="#35a853"/><path d="M11 11l-1 6a6 6 0 0 0 6.500-8.500H11z" fill="#fbc116"/><circle cx="11" cy="11" r="2.700" fill="#4285f4" stroke="#fff"/>',
  '<path d="M6 5h9v10H6z" fill="#e9edf2"/><path d="M8 7h5v5H8z" fill="none" stroke="#d1424a" stroke-width="1.200"/><path d="M11 16l4-5 2 5" fill="none" stroke="#3a82cc" stroke-width="1.300"/>',
  '<path d="M5 5.500h12v12H5z" fill="#e87a20"/><path d="M8 8.500h5v2.500H9v4h5" fill="none" stroke="#fff"/><circle cx="15.500" cy="5.500" r="3.500" fill="#67bfdf"/><text x="15.500" y="7.500" font-size="5" fill="#123">2</text>' + dot,
  '<circle cx="10.500" cy="11" r="6" fill="#5865e8"/><path d="M7.500 14q-1-4 1-5h4q2 1 1 5l-2-1h-2z" fill="#fff"/><circle cx="16" cy="6" r="3" fill="#e4404b"/><text x="16" y="7.500" font-size="4" fill="#fff">9+</text>' + dot,
  '<circle cx="10.500" cy="11.500" r="6" fill="#fff"/><path d="M9 7.500v4" stroke="#36c5f0" stroke-width="2"/><path d="M11 10.500h4" stroke="#2eb67d" stroke-width="2"/><path d="M11.500 12v4" stroke="#ecb22e" stroke-width="2"/><path d="M6 12.500h4" stroke="#e01e5a" stroke-width="2"/><circle cx="15.500" cy="5.500" r="3.200" fill="#d91e60"/><text x="15.500" y="7.300" font-size="5" fill="#fff">2</text>' + dot,
  '<path d="M5 5.500h12v12H5z" fill="#17212c"/><path d="M7.500 11.500h7" stroke="#55859c" stroke-width="1.500" stroke-dasharray="1.500 .5"/>' + dot,
  '<path d="M5 5h12v12H5z" fill="#4fbd28"/><path d="M14 8H8.500v6.500H14" fill="none" stroke="#fff" stroke-width="2"/>' + dot,
  '<path d="M1 1h20v20H1z" fill="#3a3a3a"/><path d="M5 5h12v12H5z" fill="#174675"/><path d="M7 16q-3-7 3-9 6-1 6 5 0 4-5 4-3-1-2-4 1-2 3-1" fill="none" stroke="#fff" stroke-width="1.300"/><path d="M8 20.500h6" stroke="#5ba8e0"/>',
  '<path d="M5 5h12v12H5z" fill="#ec4350"/><path d="M14 8H8.500v6.500H14" fill="none" stroke="#fff" stroke-width="2"/>' + dot
].map(s => `<svg viewBox="0 0 22 22">${s}</svg>`).join('');
```
